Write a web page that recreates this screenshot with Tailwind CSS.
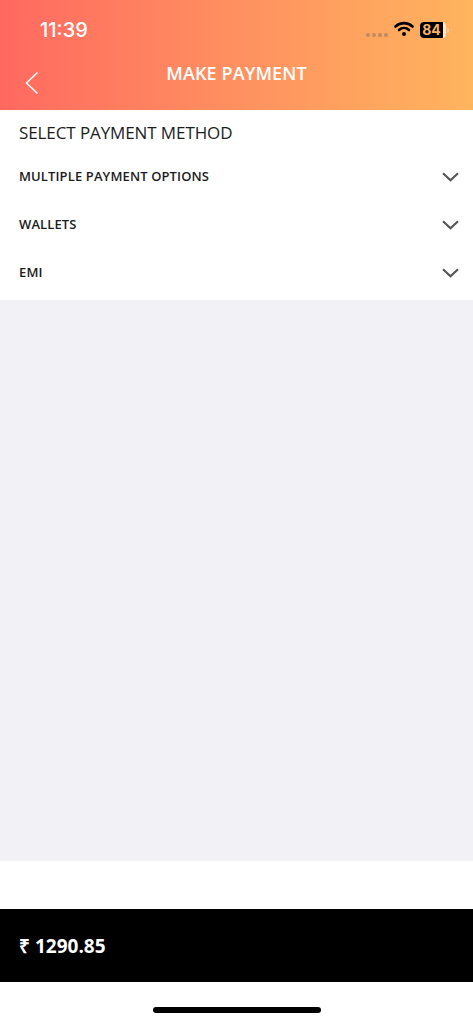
<!DOCTYPE html>
<html>
<head>
  <meta charset="UTF-8">
  <meta name="viewport" content="width=device-width, initial-scale=1.0">
  <title>Make Payment</title>
  <script src="https://cdn.jsdelivr.net/npm/@tailwindcss/browser@4"></script>
</head>
<body class="w-[473px] h-[1024px] overflow-hidden bg-white font-['Open_Sans',sans-serif]">
  <div class="flex flex-col h-[1024px]">
    <!-- header -->
    <header class="relative h-[110px] shrink-0 bg-gradient-to-r from-[#ff6860] to-[#ffb45e] text-white">
      <div class="flex items-center justify-between h-[60px] pl-10 pr-[24px]">
        <span class="text-[20px] leading-none font-['Inter',sans-serif] font-medium">11:39</span>
        <div class="flex items-center">
          <div class="flex gap-[2px] mr-[6px] mt-[10px]">
            <span class="w-[4px] h-[4px] rounded-full bg-[#c08a60]"></span>
            <span class="w-[4px] h-[4px] rounded-full bg-[#c08a60]"></span>
            <span class="w-[4px] h-[4px] rounded-full bg-[#c08a60]"></span>
            <span class="w-[4px] h-[4px] rounded-full bg-[#c08a60]"></span>
          </div>
          <svg class="w-[20px] h-[16px] mr-[6px] -mt-[2px]" viewBox="0 0 20 16" fill="none" stroke="#000" stroke-linecap="round">
            <path d="M1.5 5.5C6.2 1 13.8 1 18.5 5.5" stroke-width="2.6"/>
            <path d="M5 9c2.9-2.6 7.1-2.6 10 0" stroke-width="2.6"/>
            <circle cx="10" cy="13" r="2" fill="#000" stroke="none"/>
          </svg>
          <div class="flex items-center">
            <div class="flex items-center w-[26px] h-[16px] rounded-[4px] overflow-hidden bg-[#ffe6c8]">
              <div class="flex items-center justify-center w-[23px] h-[16px] bg-black text-[#f5b469] text-[14px] font-bold font-['Inter',sans-serif] leading-none">84</div>
            </div>
            <span class="w-[2px] h-[5px] ml-[1px] rounded-r-sm bg-white/40"></span>
          </div>
        </div>
      </div>
      <h1 class="absolute top-[62px] left-0 right-0 text-center text-[18px] tracking-[0.1px] leading-[22px] font-semibold">MAKE PAYMENT</h1>
      <svg class="absolute left-[25px] top-[71px] w-[14px] h-[24px]" viewBox="0 0 14 24" fill="none" stroke="#fff" stroke-width="1.5">
        <path d="M12.5 1.5L1.5 12l11 10.5"/>
      </svg>
    </header>

    <!-- payment methods -->
    <section class="bg-white h-[190px] shrink-0 text-[#1c1c1c]">
      <h2 class="pl-[19px] pt-[11px] text-[17px] tracking-[-0.1px] leading-[23px] font-normal">SELECT PAYMENT METHOD</h2>
      <div class="mt-[9px]">
        <div class="flex items-center justify-between h-[48px] pl-[19px] pr-[14px]">
          <span class="text-[13px] tracking-[0.12px] font-semibold">MULTIPLE PAYMENT OPTIONS</span>
          <svg class="w-[17px] h-[10px]" viewBox="0 0 17 10" fill="none" stroke="#555" stroke-width="2.2"><path d="M1 1.2l7.5 7 7.5-7"/></svg>
        </div>
        <div class="flex items-center justify-between h-[48px] pl-[19px] pr-[14px]">
          <span class="text-[13px] tracking-[0.12px] font-semibold">WALLETS</span>
          <svg class="w-[17px] h-[10px]" viewBox="0 0 17 10" fill="none" stroke="#555" stroke-width="2.2"><path d="M1 1.2l7.5 7 7.5-7"/></svg>
        </div>
        <div class="flex items-center justify-between h-[48px] pl-[19px] pr-[14px]">
          <span class="text-[13px] tracking-[0.12px] font-semibold">EMI</span>
          <svg class="w-[17px] h-[10px]" viewBox="0 0 17 10" fill="none" stroke="#555" stroke-width="2.2"><path d="M1 1.2l7.5 7 7.5-7"/></svg>
        </div>
      </div>
    </section>

    <div class="h-[561px] shrink-0 bg-[#f1f1f6]"></div>
    <div class="h-[48px] shrink-0 bg-white"></div>

    <!-- total -->
    <div class="flex items-center h-[73px] shrink-0 pl-[19px] pt-[1px] bg-black text-white text-[19px] font-bold">₹ 1290.85</div>

    <!-- home indicator -->
    <div class="flex justify-center flex-1 bg-white pt-[25px]">
      <div class="w-[168px] h-[6px] ml-[1px] rounded-full bg-black"></div>
    </div>
  </div>
</body>
</html>
